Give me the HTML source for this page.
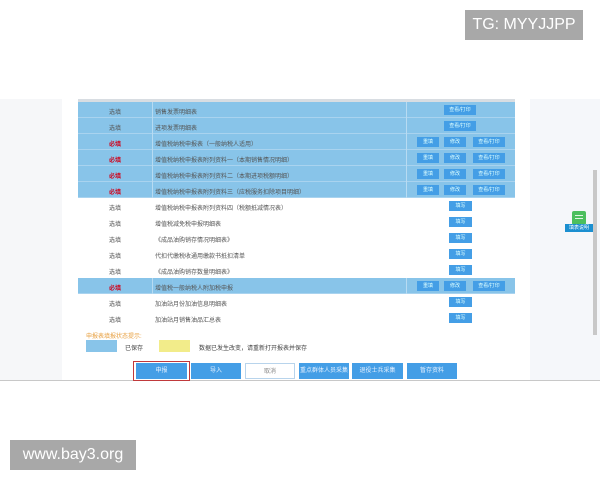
<!DOCTYPE html>
<html><head><meta charset="utf-8"><style>
*{margin:0;padding:0;box-sizing:border-box}
body{width:600px;height:480px;background:#fff;position:relative;overflow:hidden;font-family:"Liberation Sans","Noto Sans CJK SC",sans-serif}
.abs{position:absolute}
.shot{left:0;top:99px;width:600px;height:282px;background:#fff;border-bottom:1px solid #c8c8c8}
.lg{left:0;top:99px;width:62px;height:281px;background:#f6f7f9}
.rg{left:530px;top:99px;width:70px;height:281px;background:#f5f7fa}
.sb{left:593px;top:170px;width:4px;height:165px;background:#c8c8c8}
.row{position:absolute;left:78px;width:437px;height:16px;font-size:6px;color:#555;border-bottom:1px solid #fff}
.row.b{background:#88c4e9;border-bottom:1px solid #a9d3ef}
.row span{position:absolute;top:5px}
.c1{left:0;width:74px;text-align:center}
.c2{left:77px}
.row.b .d1,.row.b .d2{position:absolute;top:0;width:1px;height:16px;background:#b7dbf2}
.req{color:#d0021b;font-weight:bold}
.btn{position:absolute;top:3px;height:10px;background:#449ee6;color:#dff;font-size:5px;text-align:center;line-height:10px}
.bb{position:absolute;top:363px;height:16px;background:#449ee6;color:#e6f2ff;font-size:6px;text-align:center;line-height:16px}
.wm{background:#a8a8a8;color:#fff;font-size:16px;text-align:center}
</style></head><body>
<div class="abs shot"></div>
<div class="abs lg"></div>
<div class="abs rg"></div>
<div class="abs sb"></div>
<div class="abs" style="left:78px;top:99px;width:437px;height:3px;background:#d8dde2"></div>

<div class="row b" style="top:102px"><span class="c1">选填</span><span class="c2">销售发票明细表</span><i class="d1" style="left:74px"></i><i class="d2" style="left:328px"></i><div class="btn" style="left:366px;width:32px">查看/打印</div></div>
<div class="row b" style="top:118px"><span class="c1">选填</span><span class="c2">进项发票明细表</span><i class="d1" style="left:74px"></i><i class="d2" style="left:328px"></i><div class="btn" style="left:366px;width:32px">查看/打印</div></div>
<div class="row b" style="top:134px"><span class="c1 req">必填</span><span class="c2">增值税纳税申报表（一般纳税人适用）</span><i class="d1" style="left:74px"></i><i class="d2" style="left:328px"></i><div class="btn" style="left:339px;width:22px">重填</div><div class="btn" style="left:366px;width:22px">修改</div><div class="btn" style="left:395px;width:32px">查看/打印</div></div>
<div class="row b" style="top:150px"><span class="c1 req">必填</span><span class="c2">增值税纳税申报表附列资料一（本期销售情况明细）</span><i class="d1" style="left:74px"></i><i class="d2" style="left:328px"></i><div class="btn" style="left:339px;width:22px">重填</div><div class="btn" style="left:366px;width:22px">修改</div><div class="btn" style="left:395px;width:32px">查看/打印</div></div>
<div class="row b" style="top:166px"><span class="c1 req">必填</span><span class="c2">增值税纳税申报表附列资料二（本期进项税额明细）</span><i class="d1" style="left:74px"></i><i class="d2" style="left:328px"></i><div class="btn" style="left:339px;width:22px">重填</div><div class="btn" style="left:366px;width:22px">修改</div><div class="btn" style="left:395px;width:32px">查看/打印</div></div>
<div class="row b" style="top:182px"><span class="c1 req">必填</span><span class="c2">增值税纳税申报表附列资料三（应税服务扣除项目明细）</span><i class="d1" style="left:74px"></i><i class="d2" style="left:328px"></i><div class="btn" style="left:339px;width:22px">重填</div><div class="btn" style="left:366px;width:22px">修改</div><div class="btn" style="left:395px;width:32px">查看/打印</div></div>
<div class="row" style="top:198px"><span class="c1">选填</span><span class="c2">增值税纳税申报表附列资料四（税额抵减情况表）</span><div class="btn" style="left:371px;width:23px">填写</div></div>
<div class="row" style="top:214px"><span class="c1">选填</span><span class="c2">增值税减免税申报明细表</span><div class="btn" style="left:371px;width:23px">填写</div></div>
<div class="row" style="top:230px"><span class="c1">选填</span><span class="c2">《成品油购销存情况明细表》</span><div class="btn" style="left:371px;width:23px">填写</div></div>
<div class="row" style="top:246px"><span class="c1">选填</span><span class="c2">代扣代缴税收通用缴款书抵扣清单</span><div class="btn" style="left:371px;width:23px">填写</div></div>
<div class="row" style="top:262px"><span class="c1">选填</span><span class="c2">《成品油购销存数量明细表》</span><div class="btn" style="left:371px;width:23px">填写</div></div>
<div class="row b" style="top:278px"><span class="c1 req">必填</span><span class="c2">增值税一般纳税人附加税申报</span><i class="d1" style="left:74px"></i><i class="d2" style="left:328px"></i><div class="btn" style="left:339px;width:22px">重填</div><div class="btn" style="left:366px;width:22px">修改</div><div class="btn" style="left:395px;width:32px">查看/打印</div></div>
<div class="row" style="top:294px"><span class="c1">选填</span><span class="c2">加油站月份加油信息明细表</span><div class="btn" style="left:371px;width:23px">填写</div></div>
<div class="row" style="top:310px"><span class="c1">选填</span><span class="c2">加油站月销售油品汇总表</span><div class="btn" style="left:371px;width:23px">填写</div></div>

<div class="abs" style="left:86px;top:331px;font-size:6px;color:#e8a040">申报表填报状态提示:</div>
<div class="abs" style="left:86px;top:340px;width:31px;height:12px;background:#88c4e9"></div>
<div class="abs" style="left:125px;top:343px;font-size:6px;color:#444">已保存</div>
<div class="abs" style="left:159px;top:340px;width:31px;height:12px;background:#f2ec8a"></div>
<div class="abs" style="left:199px;top:343px;font-size:6px;color:#444">数据已发生改变，请重新打开报表并保存</div>

<div class="abs" style="left:133px;top:361px;width:57px;height:20px;border:1px solid #c0393b"></div>
<div class="bb" style="left:136px;width:51px">申报</div>
<div class="bb" style="left:191px;width:50px">导入</div>
<div class="bb" style="left:245px;width:50px;background:#fff;border:1px solid #b8d4ec;color:#888">取消</div>
<div class="bb" style="left:299px;width:50px">重点群体人员采集</div>
<div class="bb" style="left:352px;width:51px">退役士兵采集</div>
<div class="bb" style="left:407px;width:50px">暂存资料</div>

<div class="abs" style="left:572px;top:211px;width:14px;height:14px;background:#4cbf5e;border-radius:2px"></div>
<div class="abs" style="left:575px;top:215px;width:8px;height:1px;background:#dff5e2"></div>
<div class="abs" style="left:575px;top:218px;width:8px;height:1px;background:#dff5e2"></div>
<div class="abs" style="left:565px;top:224px;width:28px;height:8px;background:#1b8fd0;color:#fff;font-size:5px;text-align:center;line-height:8px">填表说明</div>

<div class="abs wm" style="left:465px;top:10px;width:118px;height:30px;line-height:30px">TG: MYYJJPP</div>
<div class="abs wm" style="left:10px;top:440px;width:126px;height:30px;line-height:30px">www.bay3.org</div>
</body></html>
